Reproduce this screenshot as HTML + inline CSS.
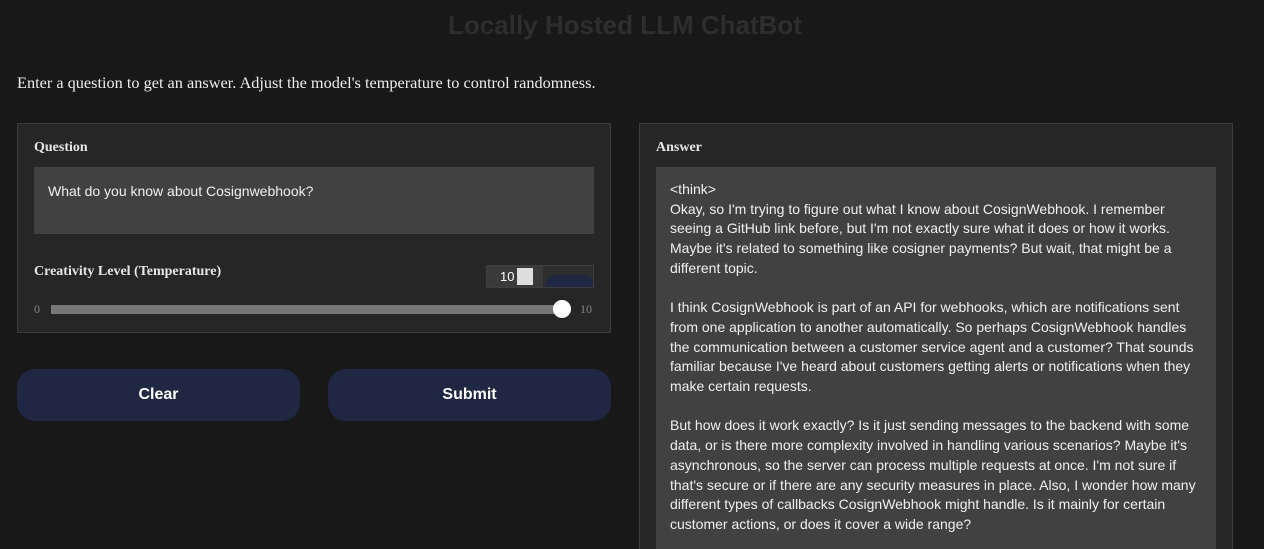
<!DOCTYPE html>
<html style="overflow:hidden;height:549px;"><head><meta charset="utf-8"><style>
body{margin:0;background:#181818;width:1264px;height:549px;overflow:hidden;position:relative;font-family:"Liberation Sans",sans-serif;}
.title{position:absolute;top:10px;left:0;width:1250px;text-align:center;font-size:26px;font-weight:bold;color:#2e2e2e;}
.desc{position:absolute;top:73px;left:17px;font-family:"Liberation Serif",serif;font-size:16.3px;color:#eee;}
.panel{position:absolute;background:#262626;border:1px solid #3c3c3c;box-sizing:border-box;}
.lbl{position:absolute;font-family:"Liberation Serif",serif;font-weight:bold;font-size:14px;color:#e6e6e6;}
.box{position:absolute;background:#414141;color:#f0f0f0;font-size:14px;}
.btn{position:absolute;top:369px;width:283px;height:52px;border-radius:18px;background:#1f2742;color:#fff;font-weight:bold;font-size:16px;text-align:center;line-height:52px;}
</style></head><body>
<div class="title">Locally Hosted LLM ChatBot</div>
<div class="desc">Enter a question to get an answer. Adjust the model's temperature to control randomness.</div>
<div class="panel" style="left:17px;top:123px;width:594px;height:210px;">
 <div class="lbl" style="left:16px;top:16px;">Question</div>
 <div class="box" style="left:16px;top:43px;width:560px;height:67px;"><div style="padding:16px 14px;">What do you know about Cosignwebhook?</div></div>
 <div class="lbl" style="left:16px;top:140px;">Creativity Level (Temperature)</div>
 <div style="position:absolute;left:468px;top:141px;width:108px;height:23px;background:#2e2e2e;border:1px solid #3e3e3e;box-sizing:border-box;overflow:hidden;">
  <div style="position:absolute;left:0;top:0;width:56px;height:21px;background:#3a3a3a;color:#fff;font-size:13px;line-height:21px;padding-left:13px;box-sizing:border-box;">10</div>
  <div style="position:absolute;left:30px;top:2px;width:16px;height:17px;background:#ddd;"></div>
  <div style="position:absolute;left:58px;top:9px;width:50px;height:13px;background:#1f2742;border-radius:12px 12px 0 0;"></div>
 </div>
 <div style="position:absolute;left:16px;top:178px;font-family:'Liberation Serif',serif;font-size:12px;color:#888;">0</div>
 <div style="position:absolute;left:33px;top:181px;width:512px;height:9px;background:#777;"></div>
 <div style="position:absolute;left:535px;top:176px;width:18px;height:18px;border-radius:50%;background:#fff;"></div>
 <div style="position:absolute;left:562px;top:178px;font-family:'Liberation Serif',serif;font-size:12px;color:#888;">10</div>
</div>
<div class="btn" style="left:17px;">Clear</div>
<div class="btn" style="left:328px;">Submit</div>
<div class="panel" style="left:639px;top:123px;width:594px;height:426px;border-bottom:none;overflow:hidden;">
 <div class="lbl" style="left:16px;top:16px;">Answer</div>
 <div class="box" style="left:16px;top:43px;width:560px;height:400px;"><div style="padding:13px 14px;line-height:19.7px;">&lt;think&gt;<br>Okay, so I'm trying to figure out what I know about CosignWebhook. I remember seeing a GitHub link before, but I'm not exactly sure what it does or how it works. Maybe it's related to something like cosigner payments? But wait, that might be a different topic.<br><br>I think CosignWebhook is part of an API for webhooks, which are notifications sent from one application to another automatically. So perhaps CosignWebhook handles the communication between a customer service agent and a customer? That sounds familiar because I've heard about customers getting alerts or notifications when they make certain requests.<br><br>But how does it work exactly? Is it just sending messages to the backend with some data, or is there more complexity involved in handling various scenarios? Maybe it's asynchronous, so the server can process multiple requests at once. I'm not sure if that's secure or if there are any security measures in place. Also, I wonder how many different types of callbacks CosignWebhook might handle. Is it mainly for certain customer actions, or does it cover a wide range?</div></div>
</div>
</body></html>
